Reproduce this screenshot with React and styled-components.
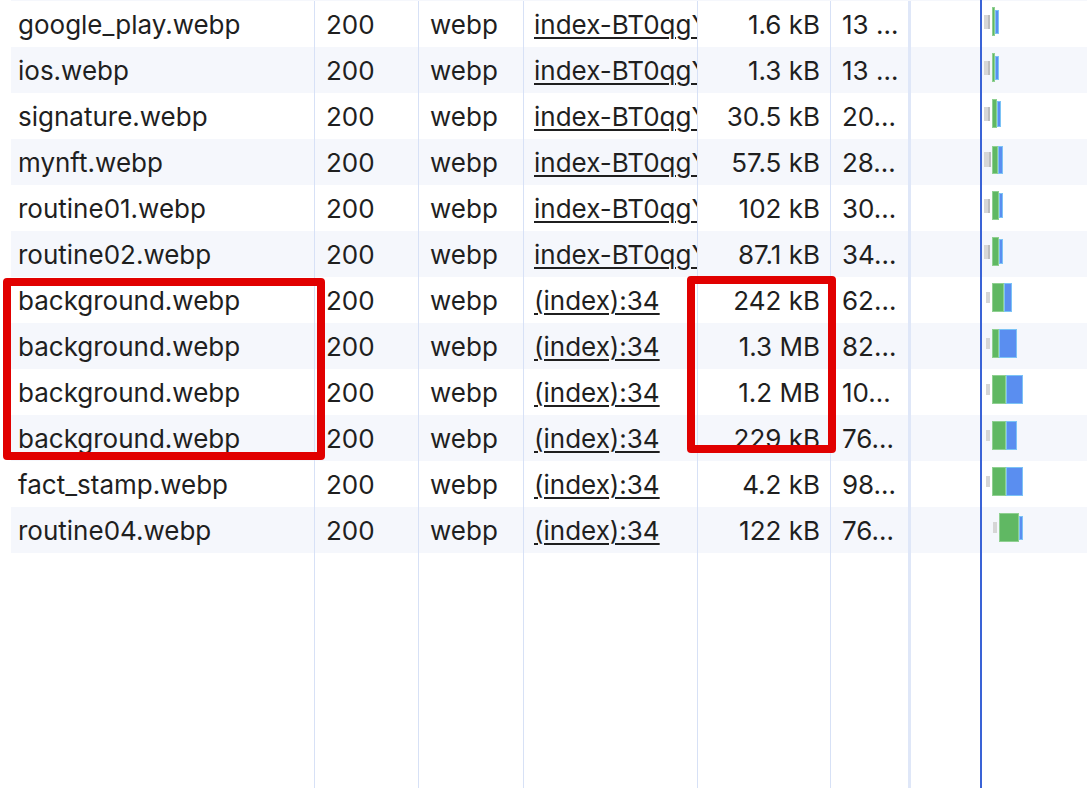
import React from 'react';
import styled, {createGlobalStyle} from 'styled-components';

const GlobalStyle = createGlobalStyle`
  html, body {
    margin: 0;
    padding: 0;
    background: #ffffff;
  }
  body {
    font-family: Inter, "Noto Sans", sans-serif;
    color: #1f1f1f;
  }
`;

const SHEET = 'index-BT0qgYl0.js:1';
const INLINE = '(index):34';

// gx: gray block left edge (page px), gap: space before green
const requests = [
  {name: 'google_play.webp', initiator: SHEET, size: '1.6 kB', time: '13 …', bar: {gx: 984, gw: 6, gh: 14, gap: 2, green: [3, 29], blue: [4, 24], edge: true}},
  {name: 'ios.webp', initiator: SHEET, size: '1.3 kB', time: '13 …', bar: {gx: 984, gw: 6, gh: 14, gap: 2, green: [3, 29], blue: [4, 24], edge: true}},
  {name: 'signature.webp', initiator: SHEET, size: '30.5 kB', time: '20…', bar: {gx: 984, gw: 6, gh: 14, gap: 2, green: [5, 29], blue: [4, 26], edge: true}},
  {name: 'mynft.webp', initiator: SHEET, size: '57.5 kB', time: '28…', bar: {gx: 984, gw: 7, gh: 15, gap: 1, green: [6, 28], blue: [5, 28], edge: true}},
  {name: 'routine01.webp', initiator: SHEET, size: '102 kB', time: '30…', bar: {gx: 984, gw: 6, gh: 14, gap: 2, green: [7, 29], blue: [4, 25], edge: true}},
  {name: 'routine02.webp', initiator: SHEET, size: '87.1 kB', time: '34…', bar: {gx: 984, gw: 6, gh: 14, gap: 2, green: [7, 29], blue: [4, 25], edge: true}},
  {name: 'background.webp', initiator: INLINE, size: '242 kB', time: '62…', bar: {gx: 986, gw: 4, gh: 11, gap: 2, green: [12, 29], blue: [8, 29]}},
  {name: 'background.webp', initiator: INLINE, size: '1.3 MB', time: '82…', bar: {gx: 986, gw: 4, gh: 11, gap: 2, green: [7, 29], blue: [18, 29]}},
  {name: 'background.webp', initiator: INLINE, size: '1.2 MB', time: '10…', bar: {gx: 986, gw: 4, gh: 11, gap: 2, green: [14, 29], blue: [17, 29]}},
  {name: 'background.webp', initiator: INLINE, size: '229 kB', time: '76…', bar: {gx: 986, gw: 4, gh: 11, gap: 2, green: [14, 29], blue: [11, 29]}},
  {name: 'fact_stamp.webp', initiator: INLINE, size: '4.2 kB', time: '98…', bar: {gx: 986, gw: 4, gh: 11, gap: 2, green: [14, 29], blue: [17, 29]}},
  {name: 'routine04.webp', initiator: INLINE, size: '122 kB', time: '76…', bar: {gx: 993, gw: 4, gh: 11, gap: 2, green: [20, 29], blue: [4, 24]}},
];

const WATERFALL_LEFT = 911;

export default function App() {
  return (
    <Page>
      <GlobalStyle/>
      <Table>
        <Rows>
          {requests.map((r, i) => (
            <Row key={i} $striped={i % 2 === 1}>
              <NameCell>{r.name}</NameCell>
              <Cell>200</Cell>
              <Cell>webp</Cell>
              <InitiatorCell><Link>{r.initiator}</Link></InitiatorCell>
              <SizeCell>{r.size}</SizeCell>
              <Cell>{r.time}</Cell>
              <WaterfallCell>
                <Bars $offset={r.bar.gx - WATERFALL_LEFT}>
                  <Queue $w={r.bar.gw} $h={r.bar.gh} $edge={r.bar.edge}/>
                  <Waiting $w={r.bar.green[0]} $h={r.bar.green[1]} $gap={r.bar.gap}/>
                  <Download $w={r.bar.blue[0]} $h={r.bar.blue[1]}/>
                </Bars>
              </WaterfallCell>
            </Row>
          ))}
        </Rows>
        <Filler>
          <NameCell/>
          <Cell/>
          <Cell/>
          <InitiatorCell/>
          <SizeCell/>
          <Cell/>
          <WaterfallCell/>
        </Filler>
      </Table>
      <TimelineMarker/>
      <Highlight $left={3} $top={278} $width={322} $height={182}/>
      <Highlight $left={687} $top={276} $width={149} $height={177}/>
    </Page>
  );
}

const Page = styled.div`
  position: relative;
  width: 1087px;
  height: 788px;
  overflow: hidden;
  background: #ffffff;
`;

const Table = styled.div`
  display: flex;
  flex-direction: column;
  height: 100%;
  margin-left: 11px;
`;

const Rows = styled.div`
  border-top: 1px solid #f5f7fc;
`;

const Grid = styled.div`
  display: grid;
  grid-template-columns: 303px 104px 105px 174px 133px 78px 1fr;
  font-size: 26px;
`;

const Row = styled(Grid)`
  height: 46px;
  line-height: 47px;
  background: ${props => props.$striped ? '#f5f7fc' : '#ffffff'};
`;

const Filler = styled(Grid)`
  flex: 1;
`;

const Cell = styled.div`
  box-sizing: border-box;
  border-left: 1px solid #d7e1f6;
  padding: 0 8px 0 11px;
  white-space: nowrap;
  overflow: hidden;
`;

const NameCell = styled(Cell)`
  border-left: none;
  padding-left: 7px;
`;

const InitiatorCell = styled(Cell)`
  padding: 0 0 0 10px;
`;

const SizeCell = styled(Cell)`
  text-align: right;
  padding: 0 10px 0 0;
`;

const WaterfallCell = styled(Cell)`
  border-left: 3px solid #dfe7f8;
  padding: 0 0 5px 0;
  display: flex;
  align-items: center;
`;

const Link = styled.span`
  text-decoration: underline;
  text-decoration-thickness: 2px;
  text-underline-offset: 3px;
`;

const Bars = styled.div`
  display: flex;
  align-items: center;
  margin-left: ${props => props.$offset}px;
`;

const Queue = styled.div`
  box-sizing: border-box;
  width: ${props => props.$w}px;
  height: ${props => props.$h}px;
  background: #d6d6d6;
  border-right: ${props => props.$edge ? '2px solid #bdbdbd' : 'none'};
`;

const Waiting = styled.div`
  box-sizing: border-box;
  width: ${props => props.$w}px;
  height: ${props => props.$h}px;
  margin-left: ${props => props.$gap}px;
  background: #60b863;
  border: 1px solid #8fd091;
`;

const Download = styled.div`
  box-sizing: border-box;
  width: ${props => props.$w}px;
  height: ${props => props.$h}px;
  background: #5a8ef0;
  border: 1px solid #7cc3f6;
`;

const TimelineMarker = styled.div`
  position: absolute;
  top: 0;
  bottom: 0;
  left: 980px;
  width: 2px;
  background: #3a63d6;
`;

const Highlight = styled.div`
  position: absolute;
  box-sizing: border-box;
  left: ${props => props.$left}px;
  top: ${props => props.$top}px;
  width: ${props => props.$width}px;
  height: ${props => props.$height}px;
  border: 8px solid #e10000;
  border-radius: 4px;
`;
